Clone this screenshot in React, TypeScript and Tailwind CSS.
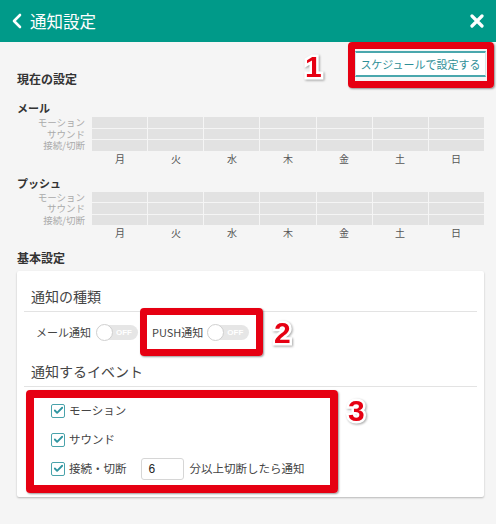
import { Check } from "lucide-react";

const days = ["月", "火", "水", "木", "金", "土", "日"];
const rows = ["モーション", "サウンド", "接続/切断"];

function ScheduleGrid({ title }: { title: string }) {
  return (
    <div>
      <div className="text-[11px] leading-[14px] font-bold text-[#333]">{title}</div>
      <div className="mt-[2px] flex flex-col gap-px">
        {rows.map((r) => (
          <div key={r} className="flex h-[10.5px] items-center">
            <div className="w-[69px] pr-[1px] text-right text-[9.5px] leading-[10px] text-[#aaa]">{r}</div>
            <div className="ml-[6px] grid h-full flex-1 grid-cols-7 gap-px">
              {days.map((d) => (
                <div key={d} className="bg-[#e2e2e2]" />
              ))}
            </div>
          </div>
        ))}
      </div>
      <div className="mt-[1px] flex">
        <div className="w-[75px]" />
        <div className="grid flex-1 grid-cols-7">
          {days.map((d) => (
            <div key={d} className="text-center text-[10px] leading-[14px] text-[#555]">
              {d}
            </div>
          ))}
        </div>
      </div>
    </div>
  );
}

function Toggle() {
  return (
    <div className="relative h-[15px] w-[41px] rounded-full bg-[#e6e6e6]">
      <div className="absolute -left-[1px] -top-[1px] h-[17px] w-[17px] rounded-full border border-[#cfcfcf] bg-white" />
      <span className="absolute right-[6px] top-0 font-['Liberation_Sans',sans-serif] text-[8px] font-bold leading-[15px] text-white">
        OFF
      </span>
    </div>
  );
}

function CheckRow({ label, children }: { label: string; children?: React.ReactNode }) {
  return (
    <div className="flex h-[29px] items-center">
      <div className="flex h-[14px] w-[14px] items-center justify-center rounded-[2px] border border-[#4aa3ab] bg-white">
        <Check size={11} strokeWidth={4} className="text-[#2f95a0]" />
      </div>
      <span className="ml-[4px] text-[11.5px] text-[#444]">{label}</span>
      {children}
    </div>
  );
}

function Marker({ n, className }: { n: string; className: string }) {
  return (
    <div
      className={`absolute font-['Liberation_Sans',sans-serif] text-[30px] font-bold leading-none text-[#e60012] [paint-order:stroke_fill] [-webkit-text-stroke:5px_white] drop-shadow-[1px_1px_1px_rgba(0,0,0,0.35)] ${className}`}
    >
      {n}
    </div>
  );
}

export default function App() {
  return (
    <div className="relative min-h-[524px] w-[496px] bg-[#f5f5f5] font-['Noto_Sans_CJK_JP','Noto_Sans',sans-serif]">
      <header className="flex h-[42px] items-center bg-[#009a89] pl-[11px] pr-[12px] text-white">
        <svg width="12" height="16" viewBox="0 0 12 16" className="mr-[7px]">
          <path d="M9 2 L3 8 L9 14" fill="none" stroke="white" strokeWidth="2.6" strokeLinecap="round" strokeLinejoin="round" />
        </svg>
        <span className="text-[16.5px] leading-none">通知設定</span>
        <svg width="14" height="14" viewBox="0 0 14 14" className="ml-auto">
          <path d="M2 2 L12 12 M12 2 L2 12" stroke="white" strokeWidth="3.2" strokeLinecap="round" />
        </svg>
      </header>

      <div className="pl-[17px] pr-[12px]">
        <div className="flex items-start justify-between pt-[9px]">
          <div className="mt-[20px] text-[12px] leading-[16px] font-bold text-[#333]">現在の設定</div>
          <button className="mr-[-2px] h-[26px] w-[131px] whitespace-nowrap border-x border-y-2 border-x-[#d5e6e8] border-y-[#4aa7ad] bg-white px-0 text-[11px] text-[#2f8f97]">
            スケジュールで設定する
          </button>
        </div>

        <div className="mt-[14px]">
          <ScheduleGrid title="メール" />
        </div>
        <div className="mt-[10px]">
          <ScheduleGrid title="プッシュ" />
        </div>

        <div className="mt-[11px] text-[12px] leading-[14px] font-bold text-[#333]">基本設定</div>

        <div className="mt-[6px] rounded-[2px] bg-white px-[7px] pb-[14px] shadow-[0_1px_2px_rgba(0,0,0,0.25)]">
          <div className="px-[7px] pb-[5px] pt-[15px] text-[14px] leading-[20px] text-[#444]">通知の種類</div>
          <div className="h-px bg-[#e3e3e3]" />
          <div className="mt-[10px] flex h-[20px] items-center pl-[12px] text-[11px] text-[#444]">
            <span>メール通知</span>
            <div className="ml-[6px]">
              <Toggle />
            </div>
            <span className="ml-[14px]">PUSH通知</span>
            <div className="ml-[5px]">
              <Toggle />
            </div>
          </div>
          <div className="px-[7px] pb-[5px] pt-[19px] text-[14px] leading-[20px] text-[#444]">通知するイベント</div>
          <div className="h-px bg-[#e3e3e3]" />
          <div className="pl-[27px] pt-[9px]">
            <CheckRow label="モーション" />
            <CheckRow label="サウンド" />
            <CheckRow label="接続・切断">
              <div className="ml-[14px] flex h-[22px] w-[43px] items-center rounded-[3px] border border-[#d6d6d6] pl-[7px] font-['Liberation_Sans',sans-serif] text-[12px] text-[#222]">
                6
              </div>
              <span className="ml-[6px] text-[11.5px] text-[#444]">分以上切断したら通知</span>
            </CheckRow>
          </div>
        </div>
      </div>

      <div className="absolute left-[348px] top-[42px] h-[46px] w-[146px] rounded-[4px] border-[7px] border-[#e60012] shadow-[1px_1px_2px_rgba(0,0,0,0.4)]" />
      <div className="absolute left-[140px] top-[308px] h-[48px] w-[123px] rounded-[4px] border-[7px] border-[#e60012] shadow-[1px_1px_2px_rgba(0,0,0,0.4)]" />
      <div className="absolute left-[26px] top-[390px] h-[103px] w-[312px] rounded-[4px] border-[8px] border-[#e60012] shadow-[1px_1px_2px_rgba(0,0,0,0.4)]" />

      <Marker n="1" className="left-[305px] top-[52px]" />
      <Marker n="2" className="left-[274px] top-[318px]" />
      <Marker n="3" className="left-[348px] top-[396px]" />
    </div>
  );
}
